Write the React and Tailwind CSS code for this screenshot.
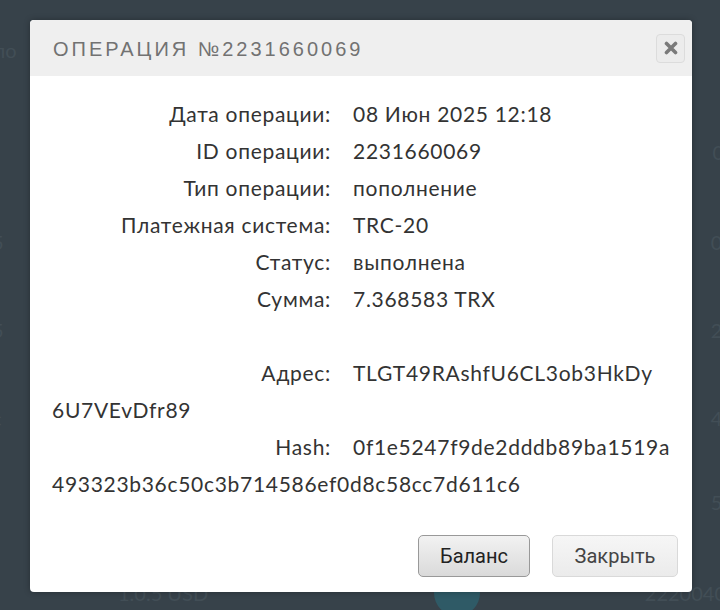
import React from 'react';

const rows = [
  ['Дата операции:', '08 Июн 2025 12:18'],
  ['ID операции:', '2231660069'],
  ['Тип операции:', 'пополнение'],
  ['Платежная система:', 'TRC-20'],
  ['Статус:', 'выполнена'],
  ['Сумма:', '7.368583 TRX'],
];

function Row({ label, children }) {
  return (
    <div className="whitespace-nowrap">
      <span className="inline-block w-[279px] text-right mr-[22px]">{label}</span>
      {children}
    </div>
  );
}

export default function App() {
  return (
    <div className="relative w-[720px] h-[610px] overflow-hidden bg-[#37424a] font-['Lato',sans-serif]">
      {/* page behind the overlay */}
      <div className="flex flex-col text-[#424e56] text-[20px] leading-none">
        <div className="flex justify-between pt-[40px]">
          <span className="-ml-[6px]">по</span>
          <span />
        </div>
        <div className="flex justify-between mt-[82px]">
          <span />
          <span className="-mr-[4px]">0</span>
        </div>
        <div className="flex justify-between mt-[70px]">
          <span className="-ml-[8px]">5</span>
          <span className="-mr-[14px]">00</span>
        </div>
        <div className="flex justify-between mt-[68px]">
          <span className="-ml-[8px]">5</span>
          <span className="-mr-[14px]">20</span>
        </div>
        <div className="flex justify-between mt-[68px]">
          <span className="-ml-[8px]">с</span>
          <span className="-mr-[14px]">48</span>
        </div>
        <div className="flex justify-between mt-[64px]">
          <span />
          <span className="-mr-[14px]">54</span>
        </div>
        <div className="flex items-center justify-between mt-[58px] pl-[118px]">
          <span>1.0.5 USD</span>
          <span className="w-[46px] h-[46px] rounded-full bg-[#2f5a66] ml-[226px]" />
          <span className="flex-1 text-right -mr-[6px]">2220040</span>
        </div>
      </div>

      {/* modal */}
      <div className="absolute left-[30px] top-[20px] w-[662px] h-[572px] bg-white rounded-[4px] shadow-[0_0_6px_rgba(0,0,0,0.3)] flex flex-col overflow-hidden">
        <div className="h-[56px] bg-[#efefef] flex items-center justify-between pl-[23px] pr-[7px]">
          <span className="text-[20px] tracking-[3px] text-[#727272] font-['Liberation_Sans',sans-serif] pt-[1px]">
            ОПЕРАЦИЯ №2231660069
          </span>
          <button className="w-[29px] h-[29px] rounded-[4px] border border-[#dcdcdc] bg-[#ececec] flex items-center justify-center">
            <svg width="14" height="14" viewBox="0 0 14 14">
              <path d="M2.5 2.5L11.5 11.5M11.5 2.5L2.5 11.5" stroke="#7a7a7a" strokeWidth="3.6" strokeLinecap="round" />
            </svg>
          </button>
        </div>

        <div className="flex-1 pt-[19px] pl-[22px] pr-[22px] text-[21px] tracking-[0.7px] leading-[37px] text-[#333]">
          {rows.map(([l, v]) => (
            <Row key={l} label={l}>{v}</Row>
          ))}
          <div className="h-[37px]" />
          <Row label="Адрес:">
            TLGT49RAshfU6CL3ob3HkDy
            <br />
            6U7VEvDfr89
          </Row>
          <Row label="Hash:">
            0f1e5247f9de2dddb89ba1519a
            <br />
            493323b36c50c3b714586ef0d8c58cc7d611c6
          </Row>
        </div>

        <div className="flex justify-end gap-[22px] pr-[14px] pb-[15px] font-['Roboto',sans-serif] text-[20px]">
          <button className="w-[112px] h-[42px] rounded-[5px] border border-[#999] bg-gradient-to-b from-[#f2f2f2] to-[#dadada] text-[#222]">
            Баланс
          </button>
          <button className="w-[126px] h-[42px] rounded-[5px] border border-[#d9d9d9] bg-gradient-to-b from-[#f6f6f6] to-[#ebebeb] text-[#444]">
            Закрыть
          </button>
        </div>
      </div>
    </div>
  );
}
